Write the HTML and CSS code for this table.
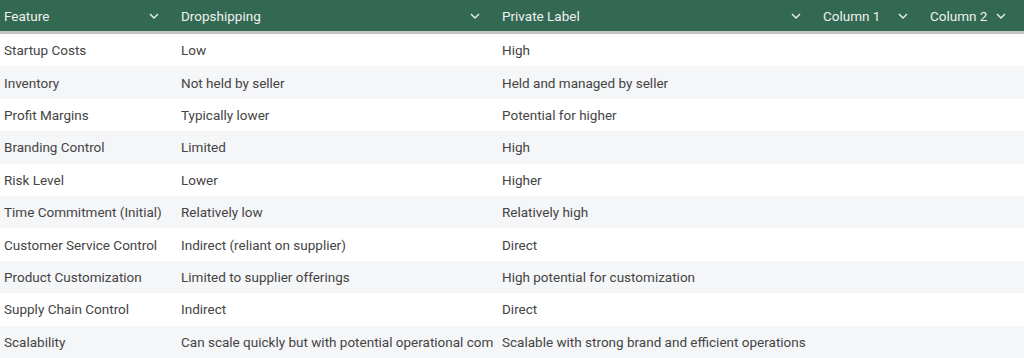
FILE: index.html
```html
<!DOCTYPE html>
<html lang="en">
<head>
  <meta charset="UTF-8">
  <title>Dropshipping vs Private Label</title>
  <link rel="stylesheet" href="styles.css">
</head>
<body>
  <div class="grid">
    <div class="head">
      <div class="hcell"><span>Feature</span><svg class="chev" viewBox="0 0 10 6"><path d="M1 1l4 4 4-4"/></svg></div>
      <div class="hcell"><span>Dropshipping</span><svg class="chev" viewBox="0 0 10 6"><path d="M1 1l4 4 4-4"/></svg></div>
      <div class="hcell"><span>Private Label</span><svg class="chev" viewBox="0 0 10 6"><path d="M1 1l4 4 4-4"/></svg></div>
      <div class="hcell"><span>Column 1</span><svg class="chev" viewBox="0 0 10 6"><path d="M1 1l4 4 4-4"/></svg></div>
      <div class="hcell"><span>Column 2</span><svg class="chev" viewBox="0 0 10 6"><path d="M1 1l4 4 4-4"/></svg></div>
    </div>

    <div class="row"><div>Startup Costs</div><div>Low</div><div>High</div><div></div><div></div></div>
    <div class="row"><div>Inventory</div><div>Not held by seller</div><div>Held and managed by seller</div><div></div><div></div></div>
    <div class="row"><div>Profit Margins</div><div>Typically lower</div><div>Potential for higher</div><div></div><div></div></div>
    <div class="row"><div>Branding Control</div><div>Limited</div><div>High</div><div></div><div></div></div>
    <div class="row"><div>Risk Level</div><div>Lower</div><div>Higher</div><div></div><div></div></div>
    <div class="row"><div>Time Commitment (Initial)</div><div>Relatively low</div><div>Relatively high</div><div></div><div></div></div>
    <div class="row"><div>Customer Service Control</div><div>Indirect (reliant on supplier)</div><div>Direct</div><div></div><div></div></div>
    <div class="row"><div>Product Customization</div><div>Limited to supplier offerings</div><div>High potential for customization</div><div></div><div></div></div>
    <div class="row"><div>Supply Chain Control</div><div>Indirect</div><div>Direct</div><div></div><div></div></div>
    <div class="row"><div>Scalability</div><div>Can scale quickly but with potential operational complexities</div><div>Scalable with strong brand and efficient operations</div><div></div><div></div></div>
  </div>
</body>
</html>
```

FILE: styles.css
```css
body {
  margin: 0;
  font-family: Roboto, 'Liberation Sans', sans-serif;
  font-size: 13.5px;
  color: #444;
  background: #fff;
}

.grid {
  width: 1024px;
}

.head,
.row {
  display: grid;
  grid-template-columns: 177px 321px 321px 107px 98px;
}

.head {
  height: 31px;
  background: #336852;
  color: #eef2ef;
  border-bottom: 3px solid #c4c6c5;
}

.hcell {
  display: flex;
  align-items: center;
  justify-content: space-between;
  padding: 0 18px 0 4px;
}

.chev {
  width: 10px;
  height: 6px;
  fill: none;
  stroke: #eef2ef;
  stroke-width: 1.4;
}

.row {
  height: 32.4px;
}

.row:nth-child(odd) {
  background: #f5f6f8;
}

.row div {
  display: flex;
  align-items: center;
  padding-left: 4px;
  white-space: nowrap;
  overflow: hidden;
  clip-path: inset(0 5px 0 0);
}
```
